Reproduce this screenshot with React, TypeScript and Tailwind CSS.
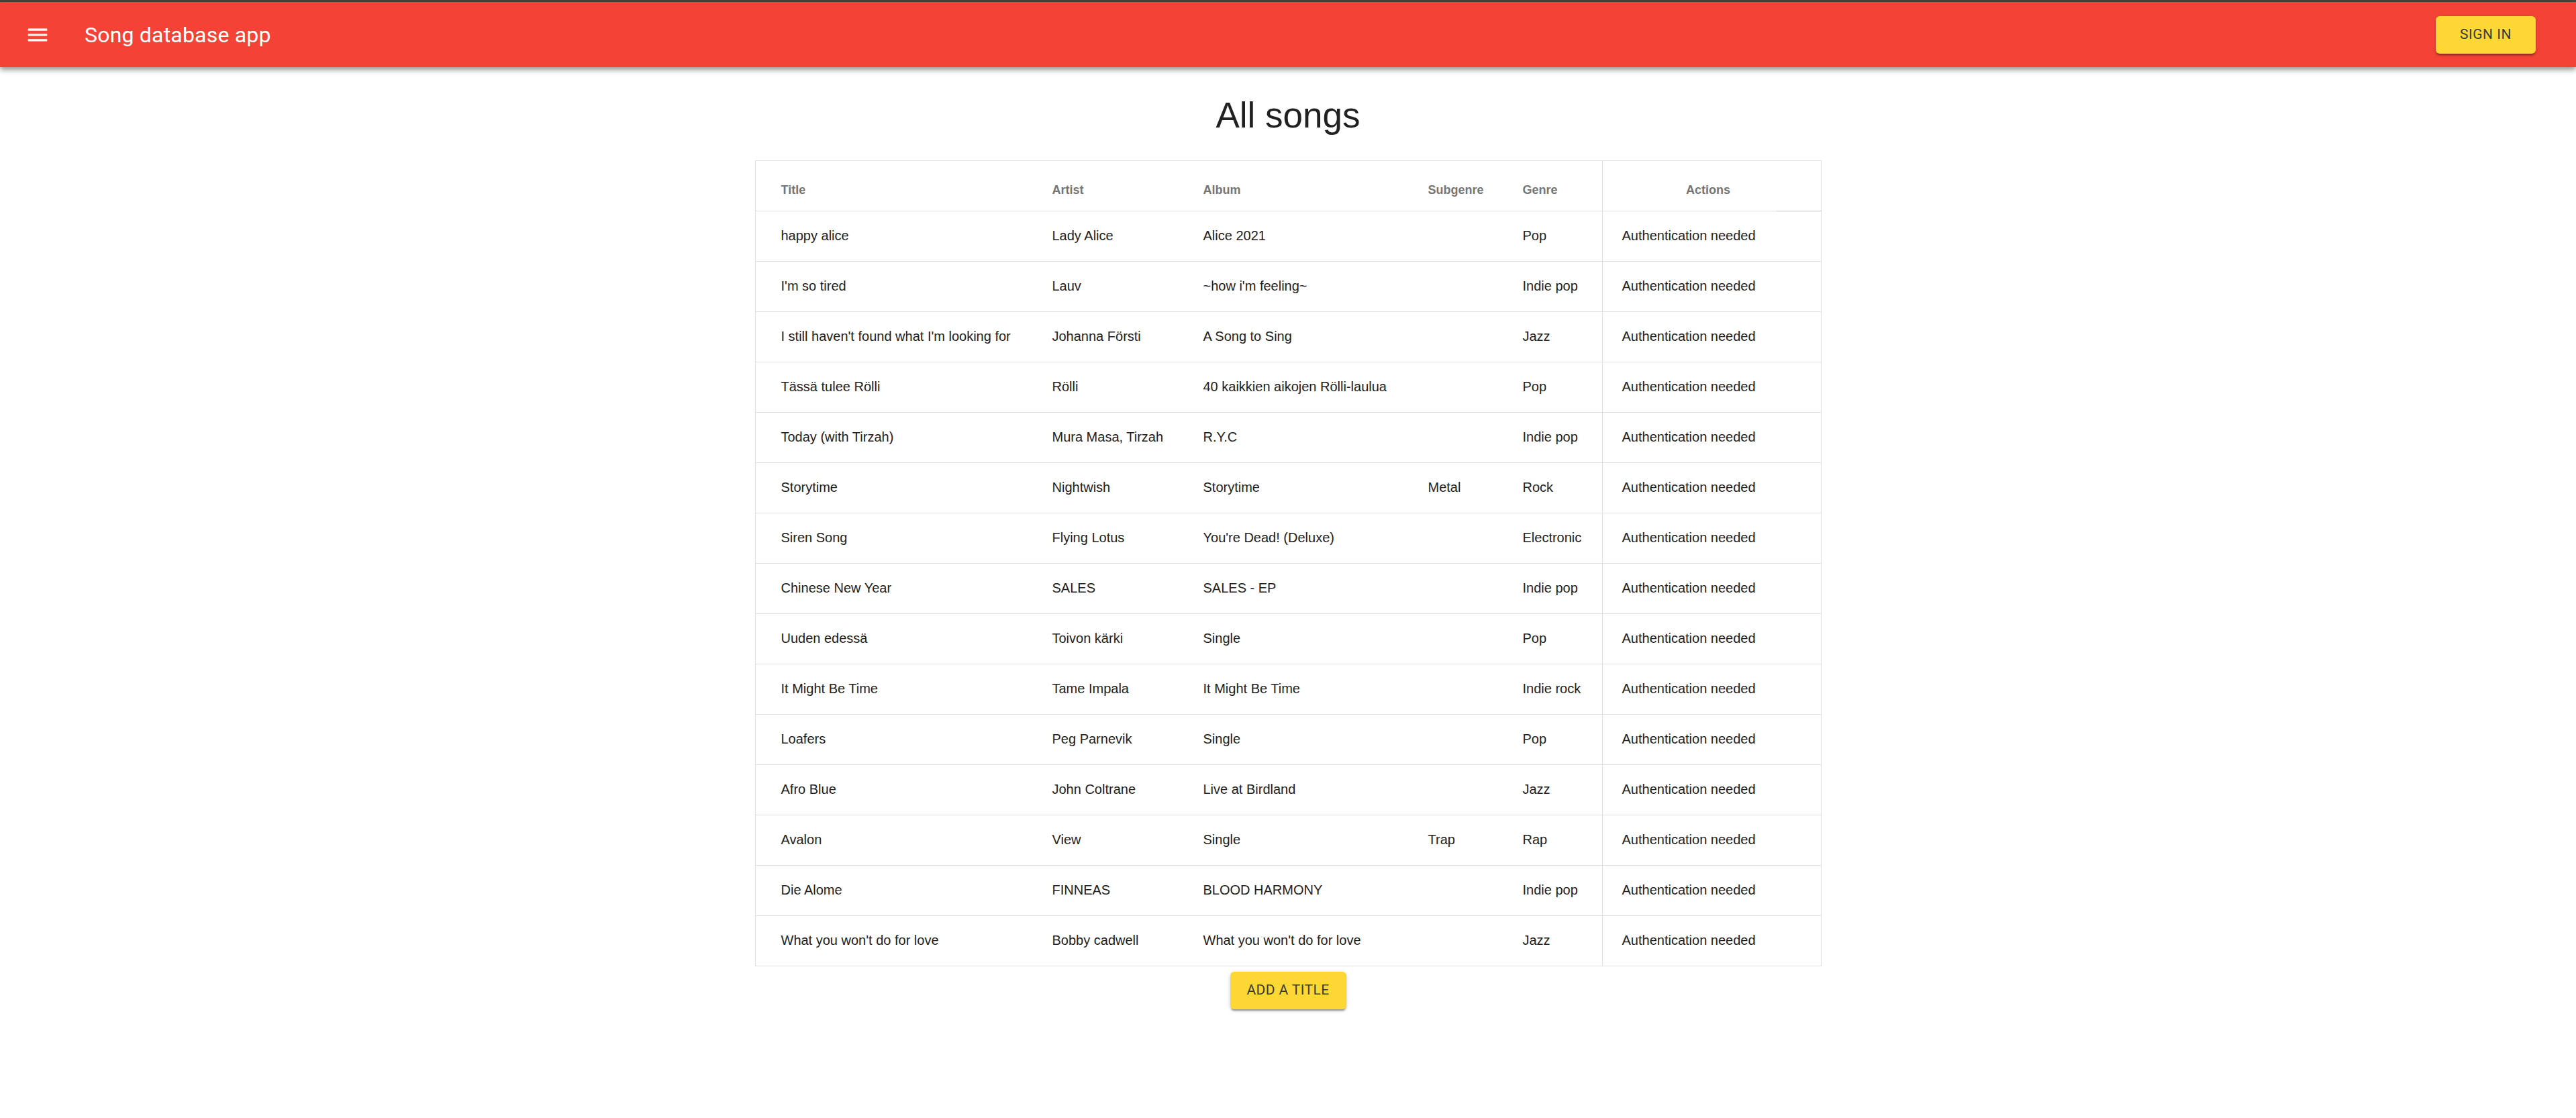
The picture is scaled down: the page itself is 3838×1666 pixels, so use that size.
import React from "react";

type Song = {
  title: string;
  artist: string;
  album: string;
  subgenre: string;
  genre: string;
};

const songs: Song[] = [
  { title: "happy alice", artist: "Lady Alice", album: "Alice 2021", subgenre: "", genre: "Pop" },
  { title: "I'm so tired", artist: "Lauv", album: "~how i'm feeling~", subgenre: "", genre: "Indie pop" },
  { title: "I still haven't found what I'm looking for", artist: "Johanna Försti", album: "A Song to Sing", subgenre: "", genre: "Jazz" },
  { title: "Tässä tulee Rölli", artist: "Rölli", album: "40 kaikkien aikojen Rölli-laulua", subgenre: "", genre: "Pop" },
  { title: "Today (with Tirzah)", artist: "Mura Masa, Tirzah", album: "R.Y.C", subgenre: "", genre: "Indie pop" },
  { title: "Storytime", artist: "Nightwish", album: "Storytime", subgenre: "Metal", genre: "Rock" },
  { title: "Siren Song", artist: "Flying Lotus", album: "You're Dead! (Deluxe)", subgenre: "", genre: "Electronic" },
  { title: "Chinese New Year", artist: "SALES", album: "SALES - EP", subgenre: "", genre: "Indie pop" },
  { title: "Uuden edessä", artist: "Toivon kärki", album: "Single", subgenre: "", genre: "Pop" },
  { title: "It Might Be Time", artist: "Tame Impala", album: "It Might Be Time", subgenre: "", genre: "Indie rock" },
  { title: "Loafers", artist: "Peg Parnevik", album: "Single", subgenre: "", genre: "Pop" },
  { title: "Afro Blue", artist: "John Coltrane", album: "Live at Birdland", subgenre: "", genre: "Jazz" },
  { title: "Avalon", artist: "View", album: "Single", subgenre: "Trap", genre: "Rap" },
  { title: "Die Alome", artist: "FINNEAS", album: "BLOOD HARMONY", subgenre: "", genre: "Indie pop" },
  { title: "What you won't do for love", artist: "Bobby cadwell", album: "What you won't do for love", subgenre: "", genre: "Jazz" },
];

const rowGrid =
  "grid grid-cols-[442px_225px_335px_141px_118px_326px] h-[75px] border-b border-[#e0e0e0] items-center";

const MenuIcon = () => (
  <svg viewBox="0 0 24 24" className="w-[38px] h-[38px] fill-white">
    <path d="M3 18h18v-2H3v2zm0-5h18v-2H3v2zm0-7v2h18V6H3z" />
  </svg>
);

const App = () => {
  return (
    <div className="min-h-screen bg-white font-['Liberation_Sans',Arial,sans-serif] text-[#212121]">
      <div className="h-[3px] bg-[#454545]" />
      <header className="relative z-10 flex h-[97px] items-center bg-[#f44336] pl-[37px] pr-[60px] shadow-[0_3px_6px_-1px_rgba(0,0,0,0.3),0_6px_7px_0_rgba(0,0,0,0.14),0_1px_14px_0_rgba(0,0,0,0.12)]">
        <MenuIcon />
        <span className="ml-[51px] font-['Roboto',sans-serif] text-[32px] tracking-[0.2px] text-white">
          Song database app
        </span>
        <button className="ml-auto flex h-[56px] w-[149px] items-center justify-center rounded-[6px] bg-[#fdd835] font-['Roboto',sans-serif] text-[21px] font-normal tracking-[0.5px] text-[#3a3a3a] shadow-[0_4px_2px_-2px_rgba(0,0,0,0.25),0_3px_3px_0_rgba(0,0,0,0.14),0_1px_7px_0_rgba(0,0,0,0.12)]">
          SIGN IN
        </button>
      </header>

      <main className="flex flex-col items-center">
        <h1 className="mt-[45px] text-[53px] font-normal leading-none text-[#212121]">All songs</h1>

        <div className="mt-[41px] w-[1589px] border-x border-t border-[#e0e0e0]">
          <div className={`${rowGrid} relative pt-[12px] text-[18px] font-bold text-[#757575]`}>
            <div className="pl-[38px]">Title</div>
            <div>Artist</div>
            <div>Album</div>
            <div>Subgenre</div>
            <div>Genre</div>
            <div className="-mt-[12px] flex h-[74px] items-center justify-center border-l border-[#e0e0e0] pt-[12px] pl-[29px] pr-[39px]">
              Actions
            </div>
            <div className="absolute right-0 bottom-[-1px] h-px w-[66px] bg-[#bdbdbd]" />
          </div>

          {songs.map((song) => (
            <div key={song.title} className={`${rowGrid} pb-[2px] text-[20px]`}>
              <div className="pl-[38px] whitespace-nowrap">{song.title}</div>
              <div className="whitespace-nowrap">{song.artist}</div>
              <div className="whitespace-nowrap">{song.album}</div>
              <div>{song.subgenre}</div>
              <div className="whitespace-nowrap">{song.genre}</div>
              <div className="-mb-[2px] flex h-[74px] items-center border-l border-[#e0e0e0] pb-[2px] pl-[29px]">
                Authentication needed
              </div>
            </div>
          ))}
        </div>

        <button className="mt-[8px] flex h-[56px] w-[173px] items-center justify-center rounded-[6px] bg-[#fdd835] font-['Roboto',sans-serif] text-[21px] font-normal tracking-[0.4px] text-[#3a3a3a] shadow-[0_4px_2px_-2px_rgba(0,0,0,0.25),0_3px_3px_0_rgba(0,0,0,0.14),0_1px_7px_0_rgba(0,0,0,0.12)]">
          ADD A TITLE
        </button>
      </main>
    </div>
  );
};

export default App;
